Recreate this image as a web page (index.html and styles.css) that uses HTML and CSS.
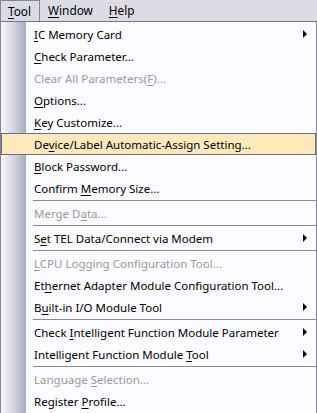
FILE: index.html
```html
<!DOCTYPE html>
<html lang="en">

<head>
    <meta charset="UTF-8">
    <meta name="viewport" content="width=device-width, initial-scale=1.0">
    <title>Tool Menu</title>
    <link rel="stylesheet" href="styles.css">
</head>

<body>
    <div class="menubar">
        <span class="bar-item open"><u>T</u>ool</span>
        <span class="bar-item"><u>W</u>indow</span>
        <span class="bar-item"><u>H</u>elp</span>
    </div>

    <div class="menu">
        <div class="item sub"><span><u>I</u>C Memory Card</span><i class="arrow"></i></div>
        <div class="item"><span><u>C</u>heck Parameter...</span></div>
        <div class="item disabled"><span>Clear All Parameters(<u>F</u>)...</span></div>
        <div class="item"><span><u>O</u>ptions...</span></div>
        <div class="item"><span><u>K</u>ey Customize...</span></div>
        <div class="item active"><span>De<u>v</u>ice/Label Automatic-Assign Setting...</span></div>
        <div class="item"><span><u>B</u>lock Password...</span></div>
        <div class="item"><span>Confirm <u>M</u>emory Size...</span></div>
        <div class="sep"></div>
        <div class="item disabled"><span>Merge D<u>a</u>ta...</span></div>
        <div class="sep"></div>
        <div class="item sub"><span>S<u>e</u>t TEL Data/Connect via Modem</span><i class="arrow"></i></div>
        <div class="sep"></div>
        <div class="item disabled"><span><u>L</u>CPU Logging Configuration Tool...</span></div>
        <div class="item"><span>Et<u>h</u>ernet Adapter Module Configuration Tool...</span></div>
        <div class="item sub"><span>B<u>u</u>ilt-in I/O Module Tool</span><i class="arrow"></i></div>
        <div class="sep"></div>
        <div class="item sub"><span>Check <u>I</u>ntelligent Function Module Parameter</span><i class="arrow"></i></div>
        <div class="item sub"><span>Intelligent Function Module <u>T</u>ool</span><i class="arrow"></i></div>
        <div class="sep"></div>
        <div class="item disabled"><span>Language <u>S</u>election...</span></div>
        <div class="item"><span>Register <u>P</u>rofile...</span></div>
    </div>
</body>

</html>
```

FILE: styles.css
```css
* {
    margin: 0;
    padding: 0;
    box-sizing: border-box;
    font-family: 'Noto Sans', 'Open Sans', sans-serif;
}

body {
    background-color: #fcfbff;
    color: #000;
    font-size: 11.5px;
    width: 317px;
    overflow: hidden;
}

u {
    text-decoration: underline;
    text-underline-offset: 2px;
}

.menubar {
    display: flex;
    height: 21px;
    background: #dcdce5;
    font-size: 11.8px;
}

.bar-item {
    line-height: 21px;
    padding: 0 8px;
}

.bar-item.open {
    padding: 0 8px 0 7px;
    border: 1px solid #85859a;
    border-bottom: none;
    background: #d9dae4;
    line-height: 20px;
}

.menu {
    border: 1px solid #85859a;
    border-top: 1px solid #75758a;
    padding: 1px 0;
    background: linear-gradient(to right, #f7f7fb 0, #cfd0de 14px, #a9a9c2 25px, #fcfbff 25px);
    min-height: 400px;
}

.item {
    display: flex;
    align-items: center;
    justify-content: space-between;
    height: 22px;
    padding: 0 8px 0 32px;
    border: 1px solid transparent;
}

.item.disabled {
    color: #9a9a9a;
}

.item.active {
    background: #fde9bb;
    border-color: #6c6c82;
}

.arrow {
    width: 0;
    height: 0;
    border-left: 4px solid #000;
    border-top: 4px solid transparent;
    border-bottom: 4px solid transparent;
}

.sep {
    height: 1px;
    margin: 1px 0 1px 32px;
    background: #8a8a9e;
}
```
